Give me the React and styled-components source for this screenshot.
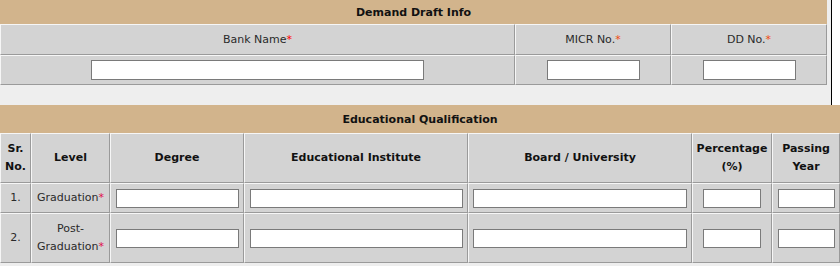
import React from "react";
import styled, { createGlobalStyle } from "styled-components";

const Global = createGlobalStyle`
  * { box-sizing: border-box; }
  html, body { margin: 0; padding: 0; }
  body {
    background: #eeeeee;
    font-family: "DejaVu Sans", Verdana, sans-serif;
    font-size: 11px;
  }
`;

const Page = styled.div`
  width: 840px;
`;

const TopArea = styled.div`
  display: flex;
  background: #ffffff;
`;

const TopPanel = styled.div`
  width: 832px;
  height: 105px;
  background: #eeeeee;
  border-right: 1px solid #000;
`;

const Grid = styled.table`
  width: ${(p) => p.$w}px;
  border-collapse: separate;
  border-spacing: 0;
  table-layout: fixed;
`;

const Title = styled.th`
  background: #d2b48c;
  height: ${(p) => p.$h}px;
  padding: 0;
  border: none;
  font-weight: bold;
  color: #111;
  text-align: center;
  vertical-align: middle;
`;

const Cell = styled.td`
  background: #d3d3d3;
  border-style: solid;
  border-width: 1px;
  border-color: #f6f6f6 #9a9a9a #9a9a9a #f6f6f6;
  height: ${(p) => p.$h}px;
  padding: 0;
  text-align: center;
  vertical-align: middle;
  line-height: 18px;
  color: #2a2a2a;
  font-weight: normal;
`;

const Head = styled(Cell).attrs({ as: "th" })`
  font-weight: ${(p) => (p.$bold ? "bold" : "normal")};
  color: ${(p) => (p.$bold ? "#111" : "#2a2a2a")};
`;

const Field = styled.input`
  display: block;
  margin: 0 auto;
  width: ${(p) => p.$w}px;
  height: ${(p) => p.$h}px;
  border: 1px solid #7a7a7a;
  background: #fff;
  padding: 0 2px;
  font: inherit;
`;

const Star = styled.span`
  color: ${(p) => p.$c};
`;

const topCols = [515, 156, 156];
const eduCols = [31, 79, 134, 224, 224, 80, 68];

export default function App() {
  return (
    <Page>
      <Global />
      <TopArea>
        <TopPanel>
          <Grid $w={827}>
            <colgroup>
              {topCols.map((w, i) => (
                <col key={i} style={{ width: w }} />
              ))}
            </colgroup>
            <thead>
              <tr>
                <Title colSpan={3} $h={24}>Demand Draft Info</Title>
              </tr>
              <tr>
                <Head $h={31}>
                  Bank Name<Star $c="#ff0000">*</Star>
                </Head>
                <Head $h={31}>
                  MICR No.<Star $c="#f04a10">*</Star>
                </Head>
                <Head $h={31}>
                  DD No.<Star $c="#f04a10">*</Star>
                </Head>
              </tr>
            </thead>
            <tbody>
              <tr>
                <Cell $h={30}>
                  <Field $w={333} $h={20} />
                </Cell>
                <Cell $h={30}>
                  <Field $w={93} $h={20} />
                </Cell>
                <Cell $h={30}>
                  <Field $w={93} $h={20} />
                </Cell>
              </tr>
            </tbody>
          </Grid>
        </TopPanel>
      </TopArea>
      <Grid $w={840}>
        <colgroup>
          {eduCols.map((w, i) => (
            <col key={i} style={{ width: w }} />
          ))}
        </colgroup>
        <thead>
          <tr>
            <Title colSpan={7} $h={28}>Educational Qualification</Title>
          </tr>
          <tr>
            <Head $bold $h={50}>
              Sr.<br />No.
            </Head>
            <Head $bold $h={50}>Level</Head>
            <Head $bold $h={50}>Degree</Head>
            <Head $bold $h={50}>Educational Institute</Head>
            <Head $bold $h={50}>Board / University</Head>
            <Head $bold $h={50}>
              Percentage<br />(%)
            </Head>
            <Head $bold $h={50}>
              Passing<br />Year
            </Head>
          </tr>
        </thead>
        <tbody>
          {[
            { n: "1.", label: <>Graduation<Star $c="#e0104a">*</Star></>, h: 30 },
            { n: "2.", label: <>Post-<br />Graduation<Star $c="#e0104a">*</Star></>, h: 50 },
          ].map((r) => (
            <tr key={r.n}>
              <Cell $h={r.h}>{r.n}</Cell>
              <Cell $h={r.h}>{r.label}</Cell>
              <Cell $h={r.h}>
                <Field $w={123} $h={19} />
              </Cell>
              <Cell $h={r.h}>
                <Field $w={213} $h={19} />
              </Cell>
              <Cell $h={r.h}>
                <Field $w={214} $h={19} />
              </Cell>
              <Cell $h={r.h}>
                <Field $w={58} $h={19} />
              </Cell>
              <Cell $h={r.h}>
                <Field $w={57} $h={19} />
              </Cell>
            </tr>
          ))}
        </tbody>
      </Grid>
    </Page>
  );
}
